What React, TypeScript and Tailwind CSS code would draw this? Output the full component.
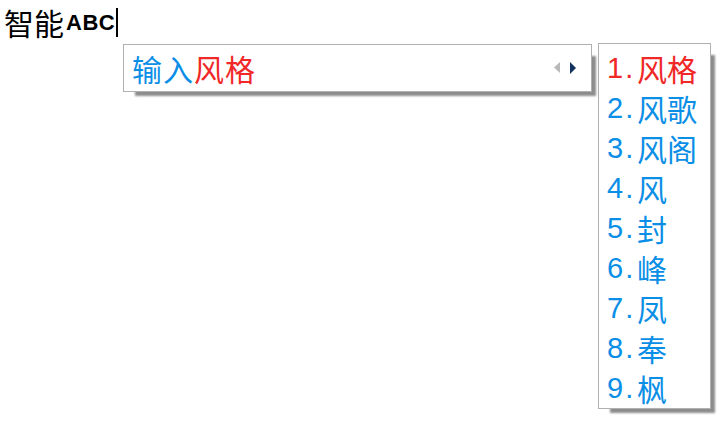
import React from "react";

const cjk = { fontFamily: '"Noto Sans CJK SC", "Noto Sans", sans-serif' };

const items = ["风格", "风歌", "风阁", "风", "封", "峰", "凤", "奉", "枫"];

export default function App() {
  return (
    <div className="relative w-[726px] h-[428px] bg-white overflow-hidden">
      <div className="flex items-center pl-[4px] pt-[3px] h-[40px]">
        <span className="text-[30px] leading-[36px] text-black" style={cjk}>
          智能
        </span>
        <span
          className="ml-[2px] text-[22px] font-bold leading-[24px] text-black mt-[3px] tracking-[0.5px]"
          style={{ fontFamily: '"Liberation Sans", sans-serif' }}
        >
          ABC
        </span>
        <span className="ml-[1px] w-[2px] h-[29px] bg-black mt-[2px]" />
      </div>

      <div className="absolute left-[123px] top-[44px] w-[469px] h-[48px] bg-white border border-[#b0b0b0] shadow-[8px_8px_2px_-4px_rgba(0,0,0,0.45)] flex items-center pl-[8px] pr-[15px]">
        <span className="text-[30px] leading-[36px] tracking-[1px] text-[#0a8ee6]" style={cjk}>
          输入<span className="text-[#f02828]">风格</span>
        </span>
        <div className="ml-auto flex items-center gap-[10px] mb-[1px]">
          <svg width="6" height="11" viewBox="0 0 6 11">
            <path d="M6 0 L0 5.5 L6 11 Z" fill="#b8b8b8" />
          </svg>
          <svg width="6" height="12" viewBox="0 0 6 12">
            <path d="M0 0 L6 6 L0 12 Z" fill="#12335f" />
          </svg>
        </div>
      </div>

      <div className="absolute left-[598px] top-[43px] w-[113px] h-[366px] bg-white border border-[#b0b0b0] shadow-[8px_8px_2px_-4px_rgba(0,0,0,0.45)] pt-[4px] pl-[8px] flex flex-col">
        {items.map((w, i) => (
          <div
            key={i}
            className={`flex items-center h-[40px] text-[30px] leading-[40px] ${
              i === 0 ? "text-[#f02828]" : "text-[#0a8ee6]"
            }`}
          >
            <span
              className="w-[30px] text-[29px] font-normal tracking-[2px]"
              style={{ fontFamily: '"Liberation Sans", sans-serif' }}
            >
              {i + 1}.
            </span>
            <span style={cjk}>{w}</span>
          </div>
        ))}
      </div>
    </div>
  );
}
